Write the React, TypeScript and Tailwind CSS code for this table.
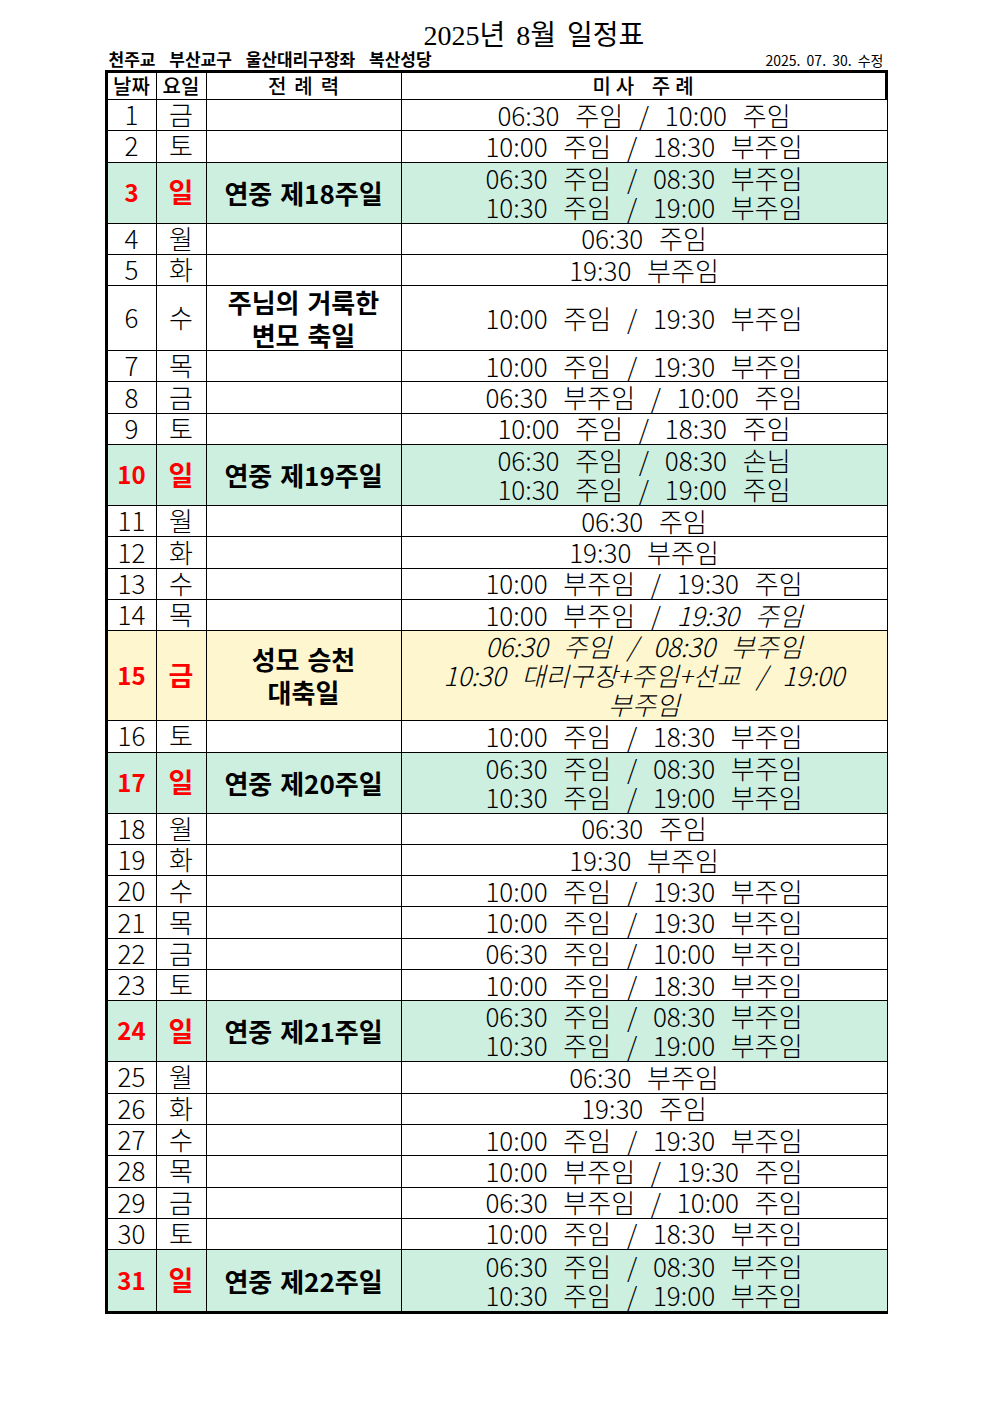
import React from 'react';

type Row = {
  d: number;
  w: string;
  feast?: string[];
  mass: React.ReactNode[];
  bg?: 'green' | 'yellow';
  h: string;
  red?: boolean;
};

const S = 'h-[31.3px]';
const D = 'h-[61px]';

const sunday = (d: number, name: string, a: string, b: string): Row => ({
  d,
  w: '일',
  feast: [name],
  mass: [a, b],
  bg: 'green',
  h: D,
  red: true,
});

const rows: Row[] = [
  { d: 1, w: '금', mass: ['06:30 주임 / 10:00 주임'], h: S },
  { d: 2, w: '토', mass: ['10:00 주임 / 18:30 부주임'], h: S },
  sunday(3, '연중 제18주일', '06:30 주임 / 08:30 부주임', '10:30 주임 / 19:00 부주임'),
  { d: 4, w: '월', mass: ['06:30 주임'], h: S },
  { d: 5, w: '화', mass: ['19:30 부주임'], h: S },
  { d: 6, w: '수', feast: ['주님의 거룩한', '변모 축일'], mass: ['10:00 주임 / 19:30 부주임'], h: 'h-[65px]' },
  { d: 7, w: '목', mass: ['10:00 주임 / 19:30 부주임'], h: S },
  { d: 8, w: '금', mass: ['06:30 부주임 / 10:00 주임'], h: S },
  { d: 9, w: '토', mass: ['10:00 주임 / 18:30 주임'], h: S },
  sunday(10, '연중 제19주일', '06:30 주임 / 08:30 손님', '10:30 주임 / 19:00 주임'),
  { d: 11, w: '월', mass: ['06:30 주임'], h: S },
  { d: 12, w: '화', mass: ['19:30 부주임'], h: S },
  { d: 13, w: '수', mass: ['10:00 부주임 / 19:30 주임'], h: S },
  {
    d: 14,
    w: '목',
    mass: [
      <>
        10:00 부주임 / <span className="italic">19:30 주임</span>
      </>,
    ],
    h: S,
  },
  {
    d: 15,
    w: '금',
    feast: ['성모 승천', '대축일'],
    mass: [
      <span className="italic">06:30 주임 / 08:30 부주임</span>,
      <span className="italic">10:30 대리구장+주임+선교 / 19:00</span>,
      <span className="italic">부주임</span>,
    ],
    bg: 'yellow',
    h: 'h-[90px]',
    red: true,
  },
  { d: 16, w: '토', mass: ['10:00 주임 / 18:30 부주임'], h: S },
  sunday(17, '연중 제20주일', '06:30 주임 / 08:30 부주임', '10:30 주임 / 19:00 부주임'),
  { d: 18, w: '월', mass: ['06:30 주임'], h: S },
  { d: 19, w: '화', mass: ['19:30 부주임'], h: S },
  { d: 20, w: '수', mass: ['10:00 주임 / 19:30 부주임'], h: S },
  { d: 21, w: '목', mass: ['10:00 주임 / 19:30 부주임'], h: S },
  { d: 22, w: '금', mass: ['06:30 주임 / 10:00 부주임'], h: S },
  { d: 23, w: '토', mass: ['10:00 주임 / 18:30 부주임'], h: S },
  sunday(24, '연중 제21주일', '06:30 주임 / 08:30 부주임', '10:30 주임 / 19:00 부주임'),
  { d: 25, w: '월', mass: ['06:30 부주임'], h: S },
  { d: 26, w: '화', mass: ['19:30 주임'], h: S },
  { d: 27, w: '수', mass: ['10:00 주임 / 19:30 부주임'], h: S },
  { d: 28, w: '목', mass: ['10:00 부주임 / 19:30 주임'], h: S },
  { d: 29, w: '금', mass: ['06:30 부주임 / 10:00 주임'], h: S },
  { d: 30, w: '토', mass: ['10:00 주임 / 18:30 부주임'], h: S },
  sunday(31, '연중 제22주일', '06:30 주임 / 08:30 부주임', '10:30 주임 / 19:00 부주임'),
];

const font = "font-['Noto_Sans_CJK_KR',sans-serif]";
const cols = 'grid grid-cols-[49px_50px_195px_1fr] grid-rows-[minmax(0,1fr)]';

export default function App() {
  return (
    <div className={`min-h-screen bg-white text-black ${font}`}>
      <div className="w-[783px] mx-auto pt-[21px]">
        <div className="pl-[319px] h-[30px] flex items-center text-[28px] leading-none font-['Liberation_Serif','Noto_Sans_CJK_KR',serif] [word-spacing:4px]">
          2025년 8월 일정표
        </div>
        <div className="flex items-end justify-between h-[19px] px-[4px] pb-[3px]">
          <span className="text-[17px] font-bold leading-none [word-spacing:10px]">
            천주교 부산교구 울산대리구장좌 복산성당
          </span>
          <span className="text-[14px] leading-none [word-spacing:3px]">2025. 07. 30. 수정</span>
        </div>

        <div className="border-l-[3px] border-t-[3px] border-b-[3px] border-black">
          {/* header */}
          <div className={`${cols} h-[27px] border-b border-black border-r-[3px] text-[20px] leading-none font-medium`}>
            <div className="flex items-center justify-center border-r border-black">날짜</div>
            <div className="flex items-center justify-center border-r border-black">요일</div>
            <div className="flex items-center justify-center border-r border-black tracking-[8px] pl-[8px]">전례력</div>
            <div className="flex items-center justify-center tracking-[5px] pl-[5px] [word-spacing:3px]">미사 주례</div>
          </div>

          {rows.map((r, i) => {
            const bg = r.bg === 'green' ? 'bg-[#ccefe0]' : r.bg === 'yellow' ? 'bg-[#fdf6cf]' : 'bg-white';
            const last = i === rows.length - 1;
            return (
              <div
                key={r.d}
                className={`${cols} ${r.h} ${bg} ${last ? '' : 'border-b'} border-black border-r`}
              >
                <div
                  className={`flex items-center justify-center border-r border-black leading-none pb-[2px] ${
                    r.red ? 'text-[#ff0000] font-bold text-[24px]' : 'font-light text-[26px]'
                  }`}
                >
                  {r.d}
                </div>
                <div
                  className={`flex items-center justify-center border-r border-black leading-none pb-[2px] ${
                    r.red ? 'text-[#ff0000] font-bold text-[27px]' : 'font-light text-[26px]'
                  }`}
                >
                  {r.w}
                </div>
                <div className="flex flex-col items-center justify-center border-r border-black font-bold text-[26px] leading-[33px] [word-spacing:2px] pb-[1px]">
                  {r.feast?.map((f) => (
                    <span key={f}>{f}</span>
                  ))}
                </div>
                <div className="flex flex-col items-center justify-center font-light text-[26px] leading-[29px] [word-spacing:10px] pb-[2px]">
                  {r.mass.map((m, k) => (
                    <span key={k} className="whitespace-nowrap">
                      {m}
                    </span>
                  ))}
                </div>
              </div>
            );
          })}
        </div>
      </div>
    </div>
  );
}
